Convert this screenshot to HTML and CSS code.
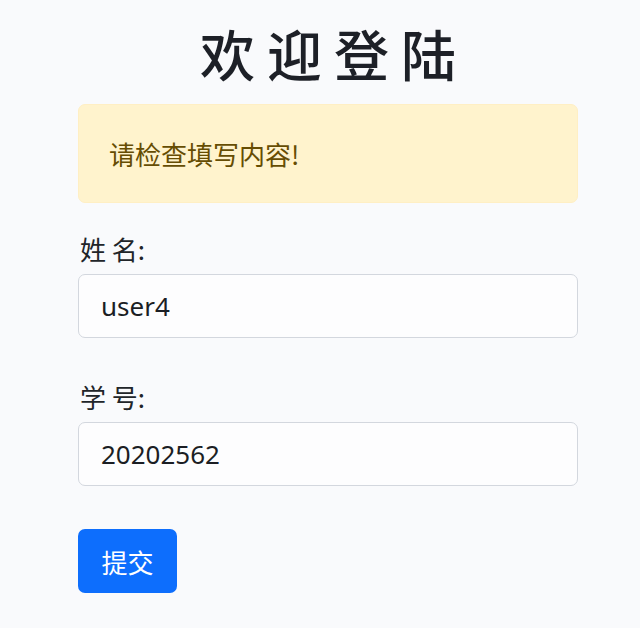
FILE: index.html
```html
<!DOCTYPE html>
<html lang="zh-CN">
<head>
<meta charset="utf-8">
<title>欢迎登陆</title>
<link rel="stylesheet" href="styles.css">
</head>
<body>
<main class="container">
  <h1 class="title">欢迎登陆</h1>
  <div class="alert">请检查填写内容!</div>
  <form class="form">
    <div class="field">
      <label class="label" for="name">姓 名:</label>
      <input class="input" id="name" type="text" value="user4">
    </div>
    <div class="field">
      <label class="label" for="sid">学 号:</label>
      <input class="input" id="sid" type="text" value="20202562">
    </div>
    <button class="btn" type="button">提交</button>
  </form>
</main>
</body>
</html>
```
FILE: styles.css
```css
html, body {
  margin: 0;
  padding: 0;
  background: #f9fafc;
}
body {
  font-family: "Noto Sans", "Noto Sans CJK SC", sans-serif;
  color: #212529;
}
.container {
  width: 500px;
  margin: 0 0 0 78px;
  padding-top: 19px;
}
.title {
  margin: 0 0 19px 0;
  font-family: "Noto Sans CJK SC", sans-serif;
  font-size: 55px;
  font-weight: 500;
  line-height: 66px;
  text-align: center;
  letter-spacing: 12px;
  padding-left: 12px;
  color: #1d2027;
}
.alert {
  background: #fff3cd;
  border: 1px solid #ffefc4;
  border-radius: 7px;
  color: #664d03;
  font-size: 26px;
  line-height: 39px;
  padding: 29px 30px;
  font-family: "Noto Sans CJK SC", sans-serif;
}
.form {
  display: flex;
  flex-direction: column;
  align-items: flex-start;
  margin-top: 26px;
}
.field {
  display: flex;
  flex-direction: column;
  width: 100%;
  margin-bottom: 39px;
}
.label {
  font-size: 26px;
  line-height: 39px;
  margin: 0 0 6px 2px;
  font-family: "Noto Sans CJK SC", sans-serif;
}
.input {
  box-sizing: border-box;
  width: 100%;
  height: 64px;
  border: 1px solid #d3d7de;
  border-radius: 7px;
  background: #fdfdfe;
  padding: 0 22px;
  font-family: "Noto Sans", "Noto Sans CJK SC", sans-serif;
  font-size: 26px;
  color: #1b1e24;
  outline: none;
}
.btn {
  margin-top: 4px;
  width: 99px;
  height: 64px;
  border: none;
  border-radius: 7px;
  background: #0d6efd;
  color: #fff;
  font-family: "Noto Sans CJK SC", sans-serif;
  font-size: 26px;
  padding: 0;
}
```
